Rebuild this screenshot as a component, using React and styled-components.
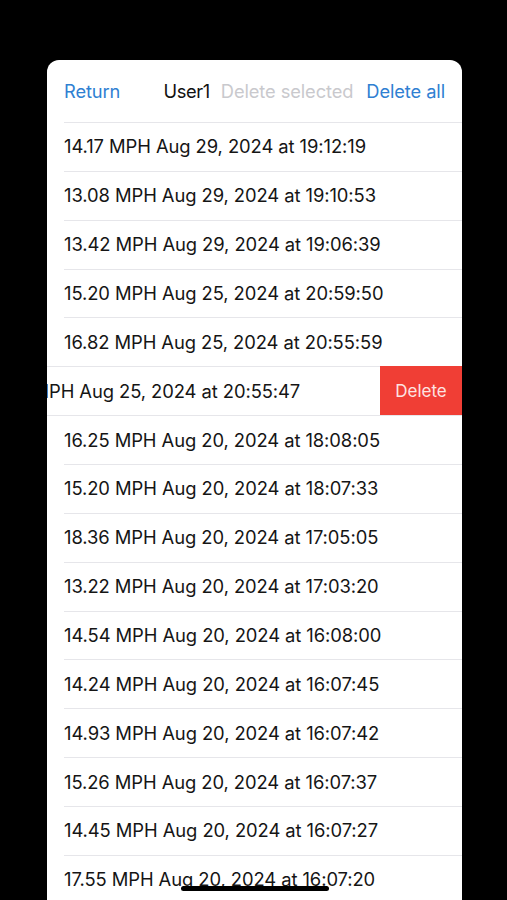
import React from "react";
import styled, { createGlobalStyle } from "styled-components";

const Global = createGlobalStyle`
  html, body { margin: 0; padding: 0; background: #000; }
  body { font-family: Inter, "Noto Sans", sans-serif; }
`;

const Screen = styled.div`
  position: relative;
  width: 507px;
  height: 900px;
  overflow: hidden;
  background: #000;
  padding: 60px 45px 0 47px;
  box-sizing: border-box;
`;

const Card = styled.div`
  background: #fff;
  border-radius: 12px 12px 0 0;
  height: 860px;
  overflow: hidden;
  display: flex;
  flex-direction: column;
`;

const Header = styled.div`
  height: 62px;
  flex: none;
  display: flex;
  align-items: center;
  padding: 0 17px;
  font-size: 18.3px;
  letter-spacing: -0.1px;
`;

const HeaderButton = styled.span`
  color: ${(p) => (p.$disabled ? "#c9c9cd" : "#2f80d2")};
`;

const Title = styled.span`
  color: #111;
  margin-left: auto;
  margin-right: 11px;
  letter-spacing: -0.4px;
`;

const Spaced = styled.span`
  margin-left: ${(p) => p.$ml || 0}px;
  display: inline-flex;
`;

const List = styled.div`
  display: flex;
  flex-direction: column;
`;

const Row = styled.div`
  position: relative;
  height: 48.87px;
  flex: none;
  overflow: hidden;
  &::before {
    content: "";
    position: absolute;
    top: 0;
    right: 0;
    left: ${(p) => (p.$full ? 0 : 17)}px;
    height: 1px;
    background: #e6e6ea;
  }
`;

const RowContent = styled.div`
  height: 100%;
  display: flex;
  align-items: center;
  padding-left: 17px;
  box-sizing: border-box;
  font-size: 18.4px;
  color: #151515;
  white-space: nowrap;
  letter-spacing: -0.08px;
  transform: translateX(${(p) => -p.$shift}px);
`;

const DeleteAction = styled.div`
  position: absolute;
  top: 0;
  right: 0;
  bottom: 0;
  width: 82px;
  background: #f03e35;
  color: #fde4e2;
  font-size: 17px;
  display: flex;
  align-items: center;
  justify-content: center;
`;

const HomeIndicator = styled.div`
  position: absolute;
  left: 181px;
  bottom: 9px;
  width: 148px;
  height: 5px;
  border-radius: 3px;
  background: #000;
`;

const rows = [
  ["14.17", "Aug 29, 2024 at 19:12:19"],
  ["13.08", "Aug 29, 2024 at 19:10:53"],
  ["13.42", "Aug 29, 2024 at 19:06:39"],
  ["15.20", "Aug 25, 2024 at 20:59:50"],
  ["16.82", "Aug 25, 2024 at 20:55:59"],
  ["15.63", "Aug 25, 2024 at 20:55:47", true],
  ["16.25", "Aug 20, 2024 at 18:08:05"],
  ["15.20", "Aug 20, 2024 at 18:07:33"],
  ["18.36", "Aug 20, 2024 at 17:05:05"],
  ["13.22", "Aug 20, 2024 at 17:03:20"],
  ["14.54", "Aug 20, 2024 at 16:08:00"],
  ["14.24", "Aug 20, 2024 at 16:07:45"],
  ["14.93", "Aug 20, 2024 at 16:07:42"],
  ["15.26", "Aug 20, 2024 at 16:07:37"],
  ["14.45", "Aug 20, 2024 at 16:07:27"],
  ["17.55", "Aug 20, 2024 at 16:07:20"],
];

export default function App() {
  return (
    <>
      <Global />
      <Screen>
        <Card>
          <Header>
            <HeaderButton>Return</HeaderButton>
            <Title>User1</Title>
            <HeaderButton $disabled>Delete selected</HeaderButton>
            <Spaced $ml={13}>
              <HeaderButton>Delete all</HeaderButton>
            </Spaced>
          </Header>
          <List>
            {rows.map(([speed, date, swiped], i) => {
              const nextSwiped = rows[i - 1] && rows[i - 1][2];
              return (
                <Row key={i} $full={swiped || nextSwiped}>
                  <RowContent $shift={swiped ? 82 : 0}>
                    {speed} MPH {date}
                  </RowContent>
                  {swiped && <DeleteAction>Delete</DeleteAction>}
                </Row>
              );
            })}
          </List>
        </Card>
        <HomeIndicator />
      </Screen>
    </>
  );
}
